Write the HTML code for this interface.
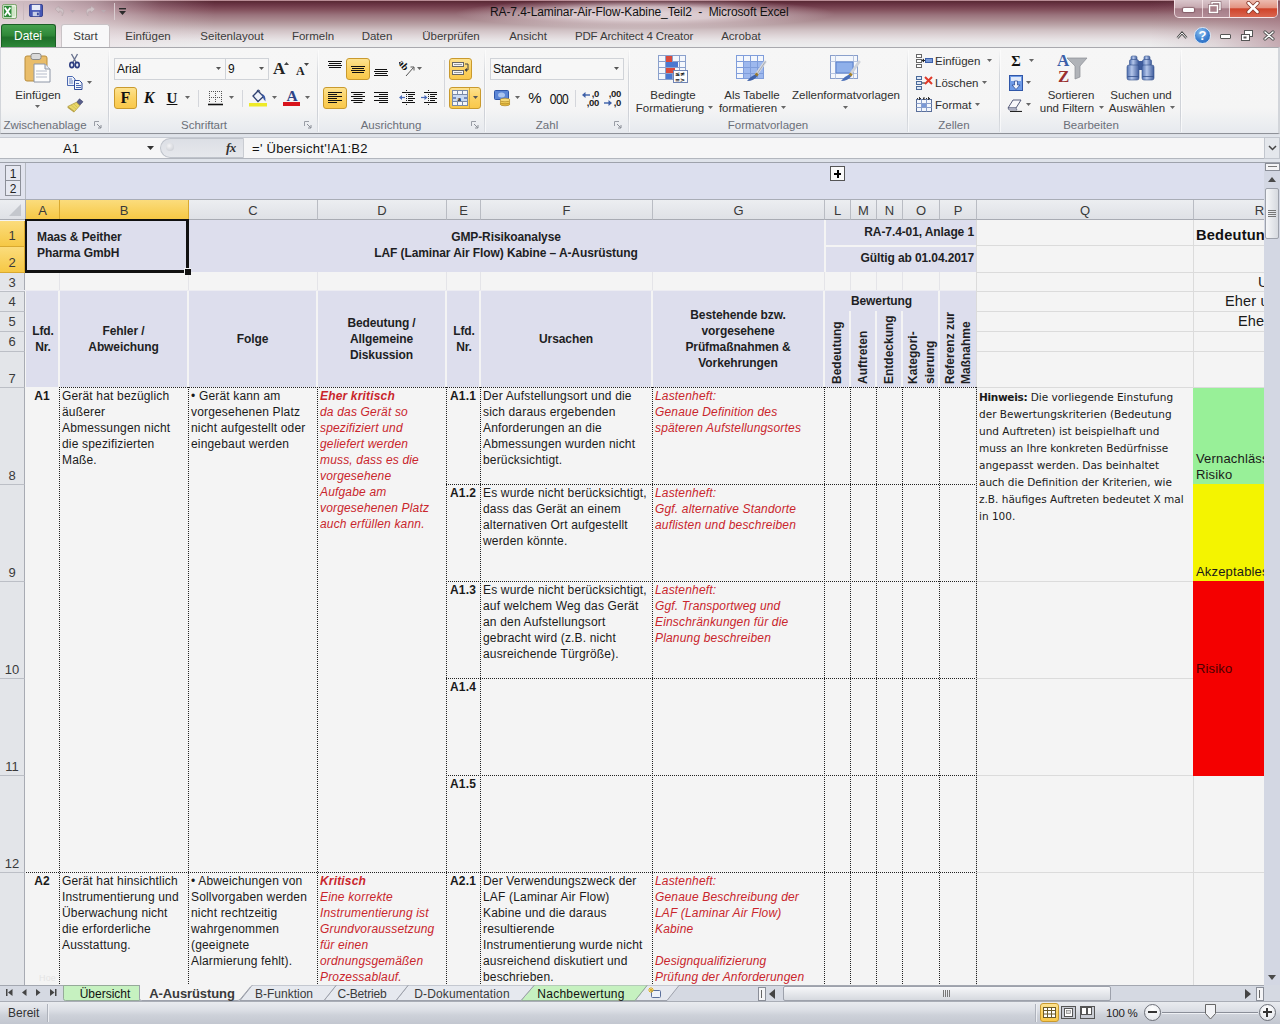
<!DOCTYPE html>
<html lang="de"><head><meta charset="utf-8"><title>RA-7.4-Laminar-Air-Flow-Kabine_Teil2 - Microsoft Excel</title>
<style>
*{box-sizing:border-box;margin:0;padding:0}
html,body{width:1280px;height:1024px;overflow:hidden;background:#f4f4f4;font-family:"Liberation Sans",sans-serif;font-size:12px;color:#1a1a1a}
.abs,.abs *{position:absolute}
#root{position:relative;width:1280px;height:1024px;overflow:hidden}
#root div,#root span.p,#root svg{position:absolute}
/* title */
#title{left:0;top:0;width:1280px;height:48px;background:linear-gradient(180deg,#e8bcc5 0px,#5a2a36 1.5px,#6d3747 5px,#84525e 10px,#9a737c 15px,#aa8a90 20px,#bba4a8 25px,#cfc0c3 30px,#ddd3d6 35px,#e8e4e6 40px,#ececed 45px,#ececed 48px)}
#titleglowL{left:0;top:0;width:220px;height:48px;background:linear-gradient(90deg,rgba(235,224,228,.82) 0,rgba(235,224,228,.76) 40px,rgba(235,224,228,.58) 95px,rgba(235,224,228,.42) 122px,rgba(235,224,228,.18) 160px,rgba(235,224,228,0) 215px)}
#titleglowT{left:455px;top:0;width:380px;height:30px;background:radial-gradient(ellipse 50% 50% at 50% 45%,rgba(240,232,235,.85) 0,rgba(240,232,235,.7) 45%,rgba(240,232,235,.25) 75%,rgba(240,232,235,0) 100%)}
#titletext{left:490px;top:3px;height:18px;font-size:12px;white-space:pre;letter-spacing:-.1px;line-height:18px;color:#111}
.rt{top:24px;height:24px;line-height:24px;font-size:11.500px;color:#3b3b3b;white-space:nowrap;text-align:center}
#ribbon{left:0;top:47px;width:1280px;height:87px;background:linear-gradient(180deg,#f6f6f6 0,#f5f5f5 60px,#eceef1 75px,#e6e9ee 86px);border-top:1px solid #a9a9ae;border-bottom:1px solid #8e9198;border-right:2px solid #d2d5da;border-left:1px solid #d2d5da}
.gl{top:117px;height:16px;line-height:16px;font-size:11.5px;color:#6b6f78;text-align:center;white-space:nowrap}
.gs{top:50px;width:1px;height:82px;background:linear-gradient(180deg,rgba(200,204,210,0),#d3d6db 30%,#cfd2d8 80%,rgba(200,204,210,.4));box-shadow:1px 0 0 rgba(255,255,255,.6)}
.rl{font-size:11.5px;line-height:13px;color:#2f2f2f;white-space:nowrap;text-align:center}
.ybtn{background:linear-gradient(180deg,#fde28f,#fbd264 50%,#f9c84a);border:1px solid #c99a2e;border-radius:3px}
.cbx{background:#f7f7f7;border:1px solid #d0d3d8}
/* formula bar */
#fbar{left:0;top:135px;width:1280px;height:28px;background:#dfe3ea}
/* grid */
.hdr{background:#e4e6ea;color:#333;font-size:13px;text-align:center}
.lav{background:#dddeed}
.ch{height:20px;line-height:22px;font-size:13px;color:#3a3a3a;text-align:center;background:linear-gradient(180deg,#eceef1,#dfe1e6);border-right:1px solid #b9bcc3;border-bottom:1px solid #a8abb3}
.rh{left:0;width:25px;font-size:13px;color:#3a3a3a;text-align:center;background:#e3e5e9;border-right:1px solid #a8abb3;border-bottom:1px solid #bcbfc6}
.sel{background:linear-gradient(180deg,#fbdc7c,#f6c845)!important;border-color:#d9a92f!important}
.hc{letter-spacing:-.1px;font-weight:bold;font-size:12px;line-height:16px;color:#1e1e24;text-align:center;white-space:nowrap}
.ct{letter-spacing:.17px;font-size:12px;line-height:16px;color:#1a1a1a;white-space:nowrap}
.red{color:#c9262c;font-style:italic}
.vd{width:0;border-left:1px dotted #222}
.hd{height:0;border-top:1px dotted #222}
.gv{width:1px;background:#d9d9d9}
.gh{height:1px;background:#d9d9d9}
.q b{letter-spacing:-.3px}.q{font-family:"DejaVu Sans","Liberation Sans",sans-serif;font-size:10.5px;line-height:17px;color:#1a1a1a;white-space:nowrap}
.rot{transform-origin:0 0;transform:rotate(-90deg);font-weight:bold;font-size:12px;line-height:14px;white-space:nowrap;color:#1e1e24}
.tab{top:986px;height:16px;line-height:16px;font-size:12px;color:#3a3a3a;white-space:nowrap;text-align:center}
</style></head><body><div id="root">
<div id="title"></div>
<div id="titleglowL"></div>
<div id="titleglowT"></div>
<div id="titletext">RA-7.4-Laminar-Air-Flow-Kabine_Teil2  -  Microsoft Excel</div>
<!-- excel icon -->
<svg style="left:2px;top:4px" width="15" height="15" viewBox="0 0 17 17"><rect x=".5" y=".5" width="16" height="16" rx="2" fill="#e9f3e4" stroke="#6a9a5a"/><rect x="2" y="2" width="9" height="13" fill="#2f8a3a"/><path d="M3.2 4 L9.5 13 M9.5 4 L3.2 13" stroke="#fff" stroke-width="2.2"/><rect x="11" y="3" width="4" height="11" fill="#cfe6c6"/></svg>
<div style="left:23px;top:3px;width:1px;height:17px;background:#c9b8bd"></div>
<!-- save -->
<svg style="left:29px;top:4px" width="14" height="13" viewBox="0 0 15 15" preserveAspectRatio="none"><rect x=".5" y=".5" width="14" height="14" rx="1.5" fill="#4657b5" stroke="#2c3a8a"/><rect x="3" y="1" width="9" height="6" fill="#e8ecf8"/><rect x="4" y="9" width="7" height="5" fill="#c9cfe6"/><rect x="8.5" y="10" width="2" height="3" fill="#3a4aa0"/></svg>
<!-- undo redo (disabled) -->
<svg style="left:52px;top:4px" width="30" height="15" viewBox="0 0 30 15"><path d="M3 5 L7 2 V4 C12 4 13 8 10 12 C11 8 9 7 7 7 V9 Z" fill="#cfc2c6" stroke="#b5a4aa" stroke-width=".6"/><path d="M18 6 h5 l-2.5 3z" fill="#b9aab0"/></svg>
<svg style="left:83px;top:4px" width="30" height="15" viewBox="0 0 30 15"><path d="M12 5 L8 2 V4 C3 4 2 8 5 12 C4 8 6 7 8 7 V9 Z" fill="#cfc2c6" stroke="#b5a4aa" stroke-width=".6"/><path d="M18 6 h5 l-2.5 3z" fill="#b9aab0"/></svg>
<div style="left:114px;top:3px;width:1px;height:17px;background:#d9ccd0"></div>
<svg style="left:118px;top:7px" width="9" height="9" viewBox="0 0 9 9"><rect x="1" y="1" width="7" height="1.4" fill="#2a2a2a"/><path d="M1 4 h7 l-3.5 4z" fill="#2a2a2a"/></svg>
<!-- window buttons -->
<div style="left:1150px;top:0;width:130px;height:47px;background:linear-gradient(90deg,rgba(170,125,136,0) 0,rgba(170,125,136,.18) 50%,rgba(165,118,130,.55) 100%)"></div>
<div style="left:1174px;top:0;width:104px;height:18px;border:1px solid rgba(255,240,242,.75);border-top:none;border-radius:0 0 5px 5px;background:linear-gradient(180deg,#dac6cb 0,#c6a9b0 45%,#a57c87 52%,#b18c96 100%)"></div>
<div style="left:1230px;top:0;width:47px;height:17px;border-radius:0 0 4px 0;background:linear-gradient(180deg,#ecbbb0 0,#e39482 45%,#cf432a 52%,#da6650 100%)"></div>
<div style="left:1202px;top:0;width:1px;height:17px;background:rgba(255,240,242,.7)"></div>
<div style="left:1229px;top:0;width:1px;height:17px;background:rgba(255,240,242,.7)"></div>
<div style="left:1183px;top:8px;width:11px;height:4px;background:#fff;border-radius:1px;box-shadow:0 0 1px 1px rgba(110,70,80,.6)"></div>
<svg style="left:1208px;top:1px" width="14" height="14" viewBox="0 0 14 14"><rect x="4" y="1.500" width="8" height="7" fill="none" stroke="#7a5560" stroke-width="2.600"/><rect x="4" y="1.500" width="8" height="7" fill="none" stroke="#fff" stroke-width="1.500"/><rect x="1.500" y="4.500" width="8" height="7" fill="#a8808a" stroke="#7a5560" stroke-width="2.600"/><rect x="1.500" y="4.500" width="8" height="7" fill="#a8808a" stroke="#fff" stroke-width="1.500"/></svg>
<svg style="left:1246px;top:1px" width="14" height="13" viewBox="0 0 14 13"><path d="M2.500 2 L11.500 11 M11.500 2 L2.500 11" stroke="#8a3a2c" stroke-width="4.200" stroke-linecap="round"/><path d="M2.500 2 L11.500 11 M11.500 2 L2.500 11" stroke="#fff" stroke-width="2.500" stroke-linecap="round"/></svg>
<!-- ribbon tabs -->

<div style="left:1px;top:24px;width:55px;height:24px;border-radius:3px 3px 0 0;background:linear-gradient(180deg,#46a04e 0,#2f8838 45%,#1f6f2a 55%,#2e8a3a 100%);border:1px solid #1c5e26;border-bottom:none"></div>
<div class="rt" style="left:0;width:56px;color:#fff;font-size:12px">Datei</div>
<div style="left:61px;top:24px;width:49px;height:24px;border-radius:3px 3px 0 0;background:#f8f8f9;border:1px solid #c9c3c6;border-bottom:none"></div>
<div class="rt" style="left:61px;width:49px">Start</div>
<div class="rt" style="left:118px;width:60px">Einfügen</div>
<div class="rt" style="left:192px;width:80px">Seitenlayout</div>
<div class="rt" style="left:283px;width:60px">Formeln</div>
<div class="rt" style="left:352px;width:50px">Daten</div>
<div class="rt" style="left:411px;width:80px">Überprüfen</div>
<div class="rt" style="left:498px;width:60px">Ansicht</div>
<div class="rt" style="left:564px;width:140px;letter-spacing:-.14px">PDF Architect 4 Creator</div>
<div class="rt" style="left:711px;width:60px">Acrobat</div>
<!-- right-side small icons -->
<svg style="left:1176px;top:30px" width="12" height="10" viewBox="0 0 12 10"><path d="M1.5 8 L6 3 L10.5 8" fill="none" stroke="#444" stroke-width="2.6"/><path d="M1.5 8 L6 3 L10.5 8" fill="none" stroke="#fff" stroke-width="1"/></svg>
<div style="left:1194px;top:27px;width:17px;height:17px;border-radius:9px;background:radial-gradient(circle at 40% 30%,#8fc0ee,#3b7fd0 55%,#2563b8);border:1px solid #d8e6f5;color:#fff;font-weight:bold;font-size:13px;line-height:15px;text-align:center">?</div>
<div style="left:1220px;top:34px;width:11px;height:5px;border:1px solid #555;background:#fff;border-radius:1px"></div>
<svg style="left:1240px;top:29px" width="14" height="13" viewBox="0 0 14 13"><rect x="4.5" y="1.5" width="8" height="6" fill="#fff" stroke="#555"/><rect x="1.5" y="5.5" width="8" height="6" fill="#fff" stroke="#555"/><rect x="3.5" y="7.5" width="3" height="2" fill="#555"/></svg>
<svg style="left:1263px;top:30px" width="12" height="11" viewBox="0 0 12 11"><path d="M2 2 L10 9 M10 2 L2 9" stroke="#555" stroke-width="3.2" stroke-linecap="round"/><path d="M2 2 L10 9 M10 2 L2 9" stroke="#fff" stroke-width="1.4" stroke-linecap="round"/></svg>

<div id="ribbon"></div>
<div style="left:0;top:134px;width:1280px;height:4px;background:#dde0e6"></div>
<!-- group separators -->
<div class="gs" style="left:108px"></div><div class="gs" style="left:317px"></div><div class="gs" style="left:484px"></div><div class="gs" style="left:628px"></div><div class="gs" style="left:907px"></div><div class="gs" style="left:999px"></div><div class="gs" style="left:1180px"></div>
<!-- group labels -->
<div class="gl" style="left:0;width:90px">Zwischenablage</div>
<div class="gl" style="left:154px;width:100px">Schriftart</div>
<div class="gl" style="left:341px;width:100px">Ausrichtung</div>
<div class="gl" style="left:517px;width:60px">Zahl</div>
<div class="gl" style="left:718px;width:100px">Formatvorlagen</div>
<div class="gl" style="left:924px;width:60px">Zellen</div>
<div class="gl" style="left:1041px;width:100px">Bearbeiten</div>
<!-- dialog launchers -->
<svg class="dl" style="left:94px;top:121px" width="8" height="8" viewBox="0 0 8 8"><path d="M.5 5V.5H5" fill="none" stroke="#9a9ea6"/><path d="M3 3 L7 7 M7 4 V7 H4" fill="none" stroke="#8a8e96"/></svg>
<svg class="dl" style="left:304px;top:121px" width="8" height="8" viewBox="0 0 8 8"><path d="M.5 5V.5H5" fill="none" stroke="#9a9ea6"/><path d="M3 3 L7 7 M7 4 V7 H4" fill="none" stroke="#8a8e96"/></svg>
<svg class="dl" style="left:471px;top:121px" width="8" height="8" viewBox="0 0 8 8"><path d="M.5 5V.5H5" fill="none" stroke="#9a9ea6"/><path d="M3 3 L7 7 M7 4 V7 H4" fill="none" stroke="#8a8e96"/></svg>
<svg class="dl" style="left:614px;top:121px" width="8" height="8" viewBox="0 0 8 8"><path d="M.5 5V.5H5" fill="none" stroke="#9a9ea6"/><path d="M3 3 L7 7 M7 4 V7 H4" fill="none" stroke="#8a8e96"/></svg>
<!-- CLIPBOARD -->
<svg style="left:23px;top:52px" width="30" height="32" viewBox="0 0 30 32"><rect x="2" y="4" width="22" height="25" rx="2" fill="#e9bd6a" stroke="#b98d3c"/><rect x="8" y="1.5" width="10" height="6" rx="2" fill="#d9d9d9" stroke="#8a8a8a"/><path d="M11 12 h11 l5 5 v13 h-16z" fill="#fdfdfd" stroke="#8d96a6"/><path d="M22 12 v5 h5" fill="#e6e9ef" stroke="#8d96a6"/><path d="M13 19h11M13 22h11M13 25h11" stroke="#b5bccb"/></svg>
<div class="rl" style="left:8px;top:89px;width:60px">Einfügen</div>
<svg style="left:35px;top:105px" width="5" height="3"><path d="M0 0h5L2.500 3z" fill="#666"/></svg>
<svg style="left:69px;top:53px" width="11" height="16" viewBox="0 0 11 16"><path d="M2.500 1 L7.500 10 M8.500 1 L3.500 10" stroke="#6a7390" stroke-width="1.400"/><ellipse cx="2.800" cy="12" rx="2" ry="2.600" fill="#e8ecf6" stroke="#2c3c80" stroke-width="1.600"/><ellipse cx="8.200" cy="12" rx="2" ry="2.600" fill="#e8ecf6" stroke="#2c3c80" stroke-width="1.600"/></svg>
<svg style="left:67px;top:76px" width="16" height="14" viewBox="0 0 16 14"><path d="M.5 .5h5l2.500 2.500v6.500h-7.500z" fill="#eef2fa" stroke="#4a68b0"/><path d="M2 3h3M2 5h4M2 7h4" stroke="#6f86c0"/><path d="M7.500 4.500h5l2.500 2.500v6.500h-7.500z" fill="#f4f7fc" stroke="#2f4a98"/><path d="M9 7.500h3M9 9.500h5M9 11.500h5" stroke="#4a68b0"/></svg>
<svg style="left:87px;top:81px" width="5" height="3"><path d="M0 0h5L2.500 3z" fill="#666"/></svg>
<svg style="left:67px;top:98px" width="17" height="15" viewBox="0 0 17 15"><path d="M12.500 .8 L16 3.800 L12.500 7.500 L9.500 4.500z" fill="#5a5f8c" stroke="#3b3f66" stroke-width=".6"/><path d="M9.500 4.200 L12.800 7.600 L7.500 13.500 L.8 8.500z" fill="#e9d768" stroke="#a89238" stroke-width=".7"/><path d="M.8 8.500 L7.500 13.500 L7 14.500 L.5 9.800z" fill="#b8a040"/><path d="M4 7l5 4M6.500 5.500l4 4" stroke="#c9b648" stroke-width=".6"/></svg>
<!-- FONT -->
<div class="cbx" style="left:114px;top:58px;width:112px;height:22px"></div>
<div class="cbx" style="left:225px;top:58px;width:44px;height:22px"></div>
<div class="rl" style="left:117px;top:62px;font-size:12px;line-height:14px;color:#111">Arial</div>
<div class="rl" style="left:228px;top:62px;font-size:12px;line-height:14px;color:#111">9</div>
<svg style="left:216px;top:67px" width="5" height="3"><path d="M0 0h5L2.500 3z" fill="#555"/></svg>
<svg style="left:259px;top:67px" width="5" height="3"><path d="M0 0h5L2.500 3z" fill="#555"/></svg>
<div style="left:273px;top:59px;font-family:'Liberation Serif',serif;font-weight:bold;font-size:17px;line-height:20px;color:#222">A</div>
<svg style="left:284px;top:62px" width="5" height="3"><path d="M0 3h5L2.500 0z" fill="#444"/></svg>
<div style="left:296px;top:63px;font-family:'Liberation Serif',serif;font-weight:bold;font-size:12px;line-height:16px;color:#222">A</div>
<svg style="left:304px;top:63px" width="5" height="3"><path d="M0 0h5L2.500 3z" fill="#444"/></svg>
<div class="ybtn" style="left:114px;top:87px;width:23px;height:22px"></div>
<div style="left:114px;top:88px;width:23px;font-family:'Liberation Serif',serif;font-weight:bold;font-size:16px;line-height:20px;text-align:center;color:#111">F</div>
<div style="left:138px;top:88px;width:22px;font-family:'Liberation Serif',serif;font-weight:bold;font-style:italic;font-size:16px;line-height:20px;text-align:center;color:#111">K</div>
<div style="left:161px;top:88px;width:22px;font-family:'Liberation Serif',serif;font-weight:bold;font-size:15px;line-height:20px;text-align:center;color:#111;text-decoration:underline">U</div>
<svg style="left:185px;top:96px" width="5" height="3"><path d="M0 0h5L2.500 3z" fill="#666"/></svg>
<div style="left:198px;top:90px;width:1px;height:17px;background:#d4d6db"></div>
<svg style="left:208px;top:90px" width="15" height="16" viewBox="0 0 15 16"><path d="M1 1.500h13M1 7.500h13M1.500 1v12M7.500 1v12M13.500 1v12" stroke="#555" stroke-dasharray="1 1"/><path d="M0 14.500h15" stroke="#111" stroke-width="1.6"/></svg>
<svg style="left:229px;top:96px" width="5" height="3"><path d="M0 0h5L2.500 3z" fill="#666"/></svg>
<div style="left:242px;top:90px;width:1px;height:17px;background:#d4d6db"></div>
<svg style="left:248px;top:88px" width="20" height="20" viewBox="0 0 20 20"><path d="M5 8 L10 3 L15.500 8.500 L10 13.500z" fill="#eef1f8" stroke="#2f4070" stroke-width="1.300"/><path d="M9 3.500 q1-3 3 0" fill="none" stroke="#2f4070" stroke-width="1.100"/><path d="M13 6 q5 0 4.500 7.500 q-2.500-2-3-6z" fill="#3a5aa8"/><rect x="1" y="15" width="18" height="3.500" fill="#eeea28"/></svg>
<svg style="left:272px;top:96px" width="5" height="3"><path d="M0 0h5L2.500 3z" fill="#666"/></svg>
<div style="left:284px;top:86px;width:16px;font-family:'Liberation Serif',serif;font-weight:bold;font-size:15.500px;line-height:20px;text-align:center;color:#2f4488">A</div>
<div style="left:283px;top:102px;width:17px;height:4px;background:#d8141c"></div>
<svg style="left:305px;top:96px" width="5" height="3"><path d="M0 0h5L2.500 3z" fill="#666"/></svg>
<!-- ALIGNMENT -->
<div class="ybtn" style="left:346px;top:58px;width:24px;height:22px"></div>
<div class="ybtn" style="left:323px;top:87px;width:24px;height:22px"></div>
<div class="ybtn" style="left:449px;top:58px;width:23px;height:22px"></div>
<div class="ybtn" style="left:449px;top:87px;width:32px;height:22px"></div>
<div style="left:469px;top:88px;width:1px;height:20px;background:#d7a93a"></div>
<svg style="left:328px;top:61px" width="14" height="8" viewBox="0 0 14 8"><path d="M0 .5h14M1 2.500h12M0 4.500h14M1 6.500h12" stroke="#111"/></svg>
<svg style="left:351px;top:66px" width="14" height="8" viewBox="0 0 14 8"><path d="M0 .5h14M1 2.500h12M0 4.500h14M1 6.500h12" stroke="#111"/></svg>
<svg style="left:374px;top:69px" width="14" height="8" viewBox="0 0 14 8"><path d="M1 .5h12M0 2.500h14M1 4.500h12M0 6.500h14" stroke="#111"/></svg>
<svg style="left:399px;top:59px" width="17" height="18" viewBox="0 0 17 18"><path d="M7 17 L14.500 8.500" stroke="#555" stroke-width="1"/><path d="M11.500 8h3.500v3.500" fill="none" stroke="#555" stroke-width="1"/><text x="-1" y="9" font-family="Liberation Serif" font-size="10" font-weight="bold" fill="#111" transform="rotate(50 4 6)">ab</text></svg>
<svg style="left:417px;top:67px" width="5" height="3"><path d="M0 0h5L2.500 3z" fill="#666"/></svg>
<div style="left:444px;top:60px;width:1px;height:47px;background:#d4d6db"></div>
<svg style="left:452px;top:61px" width="18" height="16" viewBox="0 0 18 16"><rect x=".5" y="1.500" width="11" height="4" fill="#f4f4f4" stroke="#666"/><rect x=".5" y="9.500" width="11" height="4" fill="#f4f4f4" stroke="#666"/><path d="M2 3.500h8M2 11.500h8" stroke="#999"/><path d="M13 3h3v6h-3" fill="none" stroke="#444"/><path d="M15 7l-2.500 2 2.500 2z" fill="#444"/></svg>
<svg style="left:328px;top:92px" width="14" height="12" viewBox="0 0 14 12"><path d="M0 .5h14M0 2.500h9M0 4.500h14M0 6.500h9M0 8.500h14M0 10.500h9" stroke="#111"/></svg>
<svg style="left:351px;top:92px" width="14" height="12" viewBox="0 0 14 12"><path d="M0 .5h14M2.500 2.500h9M0 4.500h14M2.500 6.500h9M0 8.500h14M2.500 10.500h9" stroke="#111"/></svg>
<svg style="left:374px;top:92px" width="14" height="12" viewBox="0 0 14 12"><path d="M0 .5h14M5 2.500h9M0 4.500h14M5 6.500h9M0 8.500h14M5 10.500h9" stroke="#111"/></svg>
<svg style="left:399px;top:90px" width="17" height="16" viewBox="0 0 17 16"><path d="M3 2.500h13M9 4.500h7M9 6.500h5M9 8.500h7M9 10.500h5M3 12.500h13" stroke="#111"/><path d="M7.500 0v16" stroke="#222" stroke-dasharray="1 1"/><path d="M1 7.500h5" stroke="#4a6ab8" stroke-width="1.200"/><path d="M0 7.500l3-2.500v5z" fill="#4a6ab8"/></svg>
<svg style="left:421px;top:90px" width="17" height="16" viewBox="0 0 17 16"><path d="M3 2.500h13M9 4.500h7M9 6.500h5M9 8.500h7M9 10.500h5M3 12.500h13" stroke="#111"/><path d="M7.500 0v16" stroke="#222" stroke-dasharray="1 1"/><path d="M0 7.500h5" stroke="#4a6ab8" stroke-width="1.200"/><path d="M6.500 7.500l-3-2.500v5z" fill="#4a6ab8"/></svg>
<svg style="left:452px;top:90px" width="16" height="16" viewBox="0 0 16 16"><rect x=".5" y=".5" width="15" height="15" fill="#f4f6fa" stroke="#7a8aa8"/><path d="M.5 4.500h15M.5 11.500h15M5.500 .5v4M10.500 .5v4M5.500 11.500v4M10.500 11.500v4" stroke="#7a8aa8"/><rect x="1" y="5" width="14" height="6" fill="#c9d9f2"/><text x="5.500" y="10.500" font-family="Liberation Serif" font-size="7" font-weight="bold" fill="#111">a</text><path d="M1 8h3M12 8h3" stroke="#1f3f8a"/></svg>
<svg style="left:473px;top:96px" width="5" height="3"><path d="M0 0h5L2.500 3z" fill="#555"/></svg>
<!-- NUMBER -->
<div class="cbx" style="left:490px;top:58px;width:134px;height:22px"></div>
<div class="rl" style="left:493px;top:62px;font-size:12px;line-height:14px;color:#111">Standard</div>
<svg style="left:614px;top:67px" width="5" height="3"><path d="M0 0h5L2.500 3z" fill="#555"/></svg>
<svg style="left:494px;top:89px" width="18" height="18" viewBox="0 0 18 18"><rect x=".5" y="1.500" width="14" height="9" rx="1" fill="#5b86d6" stroke="#2f56a8"/><ellipse cx="7.500" cy="6" rx="3.500" ry="2.500" fill="#a9c4f0"/><ellipse cx="11" cy="15" rx="5" ry="1.800" fill="#e2b73c" stroke="#a8801c" stroke-width=".6"/><ellipse cx="11" cy="13" rx="5" ry="1.800" fill="#f0cc58" stroke="#a8801c" stroke-width=".6"/><ellipse cx="11" cy="11" rx="5" ry="1.800" fill="#f6da7a" stroke="#a8801c" stroke-width=".6"/></svg>
<svg style="left:515px;top:96px" width="5" height="3"><path d="M0 0h5L2.500 3z" fill="#666"/></svg>
<div class="rl" style="left:525px;top:90px;width:20px;font-size:15px;line-height:16px;color:#111">%</div>
<div class="rl" style="left:547px;top:91px;width:24px;font-size:12px;line-height:16px;color:#111;letter-spacing:-.5px;transform:scaleY(1.15)">000</div>
<div style="left:575px;top:90px;width:1px;height:17px;background:#d4d6db"></div>
<div class="rl" style="left:580px;top:90px;width:19px;font-size:9.500px;line-height:8.500px;font-weight:bold;color:#222;text-align:right;letter-spacing:-.3px">,0<br>,00</div>
<svg style="left:582px;top:92px" width="8" height="6"><path d="M8 3H2" stroke="#3c5fa8" stroke-width="1.400"/><path d="M0 3l3.500-3v6z" fill="#3c5fa8"/></svg>
<div class="rl" style="left:602px;top:90px;width:19px;font-size:9.500px;line-height:8.500px;font-weight:bold;color:#222;text-align:right;letter-spacing:-.3px">,00<br>,0</div>
<svg style="left:604px;top:100px" width="8" height="6"><path d="M0 3H6" stroke="#3c5fa8" stroke-width="1.400"/><path d="M8 3l-3.500-3v6z" fill="#3c5fa8"/></svg>
<!-- STYLES -->
<svg style="left:658px;top:55px" width="31" height="28" viewBox="0 0 31 28"><rect x=".5" y=".5" width="27" height="24" fill="#f4f7fc" stroke="#8aa0cc"/><path d="M.5 6.500h27M.5 12.500h27M.5 18.500h27M7.500 .5v24M14.500 .5v24M21.500 .5v24" stroke="#8aa0cc"/><rect x="8" y="1" width="6" height="11" fill="#d94a3c"/><rect x="8" y="7" width="12" height="5" fill="#4a78d0"/><rect x="8" y="13" width="9" height="5" fill="#d94a3c"/><rect x="8" y="19" width="6" height="5" fill="#4a78d0"/><rect x="15.500" y="15.500" width="14" height="12" fill="#fdfdfd" stroke="#6f84b4"/><text x="17" y="21.300" font-family="DejaVu Sans" font-size="6" font-weight="bold" fill="#111">≤≠</text><text x="17" y="26.800" font-family="DejaVu Sans" font-size="6" font-weight="bold" fill="#111">=&gt;</text></svg>
<div class="rl" style="left:633px;top:89px;width:80px">Bedingte</div>
<div class="rl" style="left:630px;top:102px;width:80px">Formatierung</div>
<svg style="left:708px;top:106px" width="5" height="3"><path d="M0 0h5L2.500 3z" fill="#666"/></svg>
<svg style="left:736px;top:55px" width="31" height="28" viewBox="0 0 31 28"><rect x=".5" y=".5" width="27" height="23" fill="#f4f7fc"/><rect x="7.500" y="6.500" width="20" height="17" fill="#9db8ee"/><path d="M.5 6.500h27M.5 12.500h27M.5 18.500h27M7.500 .5v23M14.500 .5v23M21.500 .5v23" stroke="#7f9ddb"/><rect x=".5" y=".5" width="27" height="23" fill="none" stroke="#7f9ddb"/><path d="M29 7 L20 20" stroke="#d6d9df" stroke-width="3" stroke-linecap="round"/><path d="M29.500 6.500 L21 19" stroke="#9a9ea8" stroke-width=".8"/><path d="M20 19 q-5 2 -9 7 q7 0 10.500-5z" fill="#3f62a8"/><path d="M19.500 18.500l2.500 2" stroke="#9a7a30" stroke-width="2.500"/></svg>
<div class="rl" style="left:712px;top:89px;width:80px">Als Tabelle</div>
<div class="rl" style="left:708px;top:102px;width:80px">formatieren</div>
<svg style="left:781px;top:106px" width="5" height="3"><path d="M0 0h5L2.500 3z" fill="#666"/></svg>
<svg style="left:830px;top:55px" width="31" height="28" viewBox="0 0 31 28"><rect x=".5" y=".5" width="27" height="23" fill="#f4f7fc" stroke="#8aa0cc"/><path d="M.5 6.500h27M.5 18.500h27M5.500 .5v23M23.500 .5v23" stroke="#b9c6e0"/><rect x="6" y="7" width="17" height="11" fill="#8fb0ea" stroke="#5a80cc"/><path d="M29 7 L20 20" stroke="#cfd3da" stroke-width="3" stroke-linecap="round"/><path d="M20 19 q-5 2 -9 7 q7 0 10.500-5z" fill="#4a6fb8"/><path d="M19.500 18.500l2.500 2" stroke="#a8842c" stroke-width="2.500"/></svg>
<div class="rl" style="left:786px;top:89px;width:120px">Zellenformatvorlagen</div>
<svg style="left:843px;top:106px" width="5" height="3"><path d="M0 0h5L2.500 3z" fill="#666"/></svg>
<!-- CELLS -->
<svg style="left:916px;top:54px" width="17" height="15" viewBox="0 0 17 15"><rect x=".5" y=".5" width="5" height="3" fill="#fff" stroke="#666"/><rect x=".5" y="5.500" width="5" height="3" fill="#fff" stroke="#666"/><rect x=".5" y="10.500" width="5" height="3" fill="#fff" stroke="#666"/><rect x="9.500" y="4.500" width="7" height="4" fill="#7a9ad8" stroke="#3c5fa8"/><path d="M9 6.500H6" stroke="#222"/><path d="M5.500 6.500l2.500-2v4z" fill="#222"/></svg>
<div class="rl" style="left:935px;top:55px;text-align:left">Einfügen</div>
<svg style="left:987px;top:59px" width="5" height="3"><path d="M0 0h5L2.500 3z" fill="#666"/></svg>
<svg style="left:916px;top:75px" width="17" height="16" viewBox="0 0 17 16"><rect x=".5" y="1.500" width="5" height="3" fill="#dfe8f6" stroke="#4a6a9a"/><rect x=".5" y="6.500" width="5" height="3" fill="#dfe8f6" stroke="#4a6a9a"/><rect x=".5" y="11.500" width="5" height="3" fill="#dfe8f6" stroke="#4a6a9a"/><path d="M6 8h3" stroke="#222"/><path d="M9 2l7 7M16 2l-7 7" stroke="#e03a2a" stroke-width="2"/></svg>
<div class="rl" style="left:935px;top:77px;text-align:left">Löschen</div>
<svg style="left:982px;top:81px" width="5" height="3"><path d="M0 0h5L2.500 3z" fill="#666"/></svg>
<svg style="left:916px;top:97px" width="17" height="16" viewBox="0 0 17 16"><rect x=".5" y="2.500" width="15" height="12" fill="#f4f7fc" stroke="#5a6f9a"/><path d="M.5 6.500h15M.5 10.500h15M5.500 2.500v12M10.500 2.500v12" stroke="#8aa0cc"/><rect x="6" y="7" width="4" height="3" fill="#7a9ad8"/><path d="M1 1.500h14" stroke="#333" stroke-dasharray="1 2"/><path d="M3.500 0v3M8 0v3M12.500 0v3" stroke="#333"/></svg>
<div class="rl" style="left:935px;top:99px;text-align:left">Format</div>
<svg style="left:975px;top:103px" width="5" height="3"><path d="M0 0h5L2.500 3z" fill="#666"/></svg>
<!-- EDITING -->
<div style="left:1009px;top:51px;width:14px;font-family:'Liberation Serif',serif;font-weight:bold;font-size:14.500px;line-height:20px;color:#111;text-align:center">Σ</div>
<svg style="left:1029px;top:59px" width="5" height="3"><path d="M0 0h5L2.500 3z" fill="#666"/></svg>
<svg style="left:1009px;top:75px" width="14" height="16" viewBox="0 0 14 16"><rect x=".5" y=".5" width="13" height="15" fill="#6f9be6" stroke="#2f56a8"/><rect x="2" y="2" width="10" height="4" fill="#dfe9fa"/><path d="M5.500 6v4H3l4 4.500 4-4.500H8.500V6z" fill="#eef3fc" stroke="#1f3f8a" stroke-width=".7"/></svg>
<svg style="left:1026px;top:81px" width="5" height="3"><path d="M0 0h5L2.500 3z" fill="#666"/></svg>
<svg style="left:1007px;top:98px" width="17" height="14" viewBox="0 0 17 14"><path d="M6 2 L14 2 L9 10 L1 10z" fill="#f7f7fa" stroke="#555a78"/><path d="M1 10 L9 10 L10 12 L2 12z" fill="#d9dbe6" stroke="#555a78" stroke-width=".7"/><path d="M3 13.500h12" stroke="#222" stroke-width="1.2"/></svg>
<svg style="left:1026px;top:103px" width="5" height="3"><path d="M0 0h5L2.500 3z" fill="#666"/></svg>
<svg style="left:1056px;top:52px" width="32" height="32" viewBox="0 0 32 32"><text x="1" y="14" font-family="Liberation Serif" font-weight="bold" font-size="17" fill="#3c5fa8">A</text><text x="2" y="30" font-family="Liberation Serif" font-weight="bold" font-size="17" fill="#9a3030">Z</text><path d="M11 6 H31 L24 14 V25 L19 27 V14z" fill="#b0b3b8" stroke="#8a8d93" stroke-width=".7"/></svg>
<div class="rl" style="left:1031px;top:89px;width:80px">Sortieren</div>
<div class="rl" style="left:1027px;top:102px;width:80px">und Filtern</div>
<svg style="left:1099px;top:106px" width="5" height="3"><path d="M0 0h5L2.500 3z" fill="#666"/></svg>
<svg style="left:1126px;top:55px" width="29" height="26" viewBox="0 0 29 26"><defs><linearGradient id="bg1" x1="0" x2="1"><stop offset="0" stop-color="#4f6fb0"/><stop offset=".4" stop-color="#b4c6ea"/><stop offset="1" stop-color="#3f5c9c"/></linearGradient></defs><rect x="5" y="1" width="6" height="4" rx="1.500" fill="url(#bg1)" stroke="#34508c" stroke-width=".6"/><rect x="18" y="1" width="6" height="4" rx="1.500" fill="url(#bg1)" stroke="#34508c" stroke-width=".6"/><rect x="3.500" y="4.500" width="9" height="6" rx="1.500" fill="url(#bg1)" stroke="#34508c" stroke-width=".6"/><rect x="16.500" y="4.500" width="9" height="6" rx="1.500" fill="url(#bg1)" stroke="#34508c" stroke-width=".6"/><rect x="12" y="6" width="5" height="9" fill="#3f5c9c"/><rect x="1" y="10" width="12" height="15" rx="2" fill="url(#bg1)" stroke="#34508c" stroke-width=".6"/><rect x="16" y="10" width="12" height="15" rx="2" fill="url(#bg1)" stroke="#34508c" stroke-width=".6"/><path d="M1.500 21.500h11M16.500 21.500h11" stroke="#34508c" stroke-width=".8"/></svg>
<div class="rl" style="left:1101px;top:89px;width:80px">Suchen und</div>
<div class="rl" style="left:1097px;top:102px;width:80px">Auswählen</div>
<svg style="left:1170px;top:106px" width="5" height="3"><path d="M0 0h5L2.500 3z" fill="#666"/></svg>

<div id="fbar"></div>
<div style="left:0;top:137px;width:1264px;height:22px;background:#f6f6f7;border-top:1px solid #c6cad2;border-bottom:1px solid #b2b6be"></div>
<div style="left:160px;top:138px;width:84px;height:20px;background:linear-gradient(180deg,#dcdfe5,#e6e8ec);border-radius:10px 0 0 10px;border:1px solid #bfc3cb;border-right:1px solid #c9ccd2"></div>
<div style="left:166px;top:143px;width:8px;height:8px;border-radius:4px;background:radial-gradient(circle at 40% 35%,#f4f4f6,#c4c7ce)"></div>
<div style="left:226px;top:138px;width:16px;font-family:'Liberation Serif',serif;font-style:italic;font-weight:bold;font-size:13px;line-height:20px;color:#333;letter-spacing:-.5px">fx</div>
<div style="left:40px;top:140px;width:62px;font-size:13px;line-height:18px;text-align:center;color:#111">A1</div>
<svg style="left:147px;top:146px" width="7" height="4"><path d="M0 0h7L3.500 4z" fill="#333"/></svg>
<div style="left:252px;top:140px;font-size:13px;letter-spacing:.3px;line-height:18px;color:#111;white-space:nowrap">=' Übersicht'!A1:B2</div>
<div style="left:1264px;top:137px;width:16px;height:22px;background:#e4e7ec;border:1px solid #c2c6ce"></div>
<svg style="left:1268px;top:145px" width="9" height="6"><path d="M1 1l3.500 3.500L8 1" fill="none" stroke="#444" stroke-width="1.500"/></svg>
<div style="left:0;top:162px;width:1280px;height:1px;background:#9ea2ab"></div>

<div id="grid" style="left:0;top:163px;width:1264px;height:822px;overflow:hidden;background:#f4f4f4">
<div style="left:0;top:0;width:1264px;height:37px;background:#dcdfee"></div>
<div style="left:0;top:0;width:26px;height:37px;background:#e1e3ee;border-right:1px solid #b4b8c0"></div>
<div style="left:5px;top:2px;width:16px;height:16px;border:1px solid #8c8f98;background:#e6e8f1;font-size:12px;line-height:16px;text-align:center;color:#222">1</div>
<div style="left:5px;top:17px;width:16px;height:16px;border:1px solid #8c8f98;background:#e6e8f1;font-size:12px;line-height:16px;text-align:center;color:#222">2</div>
<div style="left:830px;top:3px;width:15px;height:15px;border:1px solid #555;background:#fafafa"></div>
<div style="left:834px;top:10px;width:7px;height:1px;background:#000;box-shadow:0 1px 0 #000"></div>
<div style="left:837px;top:7px;width:2px;height:8px;background:#000"></div>
<div style="left:0;top:36px;width:1264px;height:1px;background:#a9adb6"></div>
<div style="left:0;top:37px;width:26px;height:20px;background:linear-gradient(180deg,#eceef1,#dfe1e6);border-right:1px solid #a8abb3;border-bottom:1px solid #a8abb3"></div>
<svg style="left:9px;top:41px" width="13" height="13"><path d="M12 0V12H0Z" fill="#c4c7cd"/></svg>
<div class="ch sel" style="left:26px;top:37px;width:34px">A</div>
<div class="ch sel" style="left:60px;top:37px;width:129px">B</div>
<div class="ch" style="left:189px;top:37px;width:129px">C</div>
<div class="ch" style="left:318px;top:37px;width:129px">D</div>
<div class="ch" style="left:447px;top:37px;width:34px">E</div>
<div class="ch" style="left:481px;top:37px;width:172px">F</div>
<div class="ch" style="left:653px;top:37px;width:172px">G</div>
<div class="ch" style="left:825px;top:37px;width:26px">L</div>
<div class="ch" style="left:851px;top:37px;width:26px">M</div>
<div class="ch" style="left:877px;top:37px;width:26px">N</div>
<div class="ch" style="left:903px;top:37px;width:37px">O</div>
<div class="ch" style="left:940px;top:37px;width:37px">P</div>
<div class="ch" style="left:977px;top:37px;width:217px">Q</div>
<div class="ch" style="left:1194px;top:37px;width:132px">R</div>
<div class="rh sel" style="top:58px;height:26px;line-height:18px;padding-top:6px">1</div>
<div class="rh sel" style="top:84px;height:26px;line-height:18px;padding-top:7px">2</div>
<div class="rh" style="top:110px;height:19px;line-height:18px;padding-top:1px">3</div>
<div class="rh" style="top:129px;height:20px;line-height:18px;padding-top:1px">4</div>
<div class="rh" style="top:149px;height:20px;line-height:18px;padding-top:1px">5</div>
<div class="rh" style="top:169px;height:20px;line-height:18px;padding-top:1px">6</div>
<div class="rh" style="top:189px;height:36px;line-height:18px;padding-top:18px">7</div>
<div class="rh" style="top:225px;height:97px;line-height:18px;padding-top:79px">8</div>
<div class="rh" style="top:322px;height:97px;line-height:18px;padding-top:79px">9</div>
<div class="rh" style="top:419px;height:97px;line-height:18px;padding-top:79px">10</div>
<div class="rh" style="top:516px;height:97px;line-height:18px;padding-top:79px">11</div>
<div class="rh" style="top:613px;height:97px;line-height:18px;padding-top:79px">12</div>
<div class="rh" style="top:710px;height:118px;line-height:18px;padding-top:100px"></div>
<div style="left:26px;top:57px;width:950px;height:52px;background:#dddeed"></div>
<div style="left:26px;top:128px;width:950px;height:96px;background:#dddeed"></div>
<div style="left:824px;top:57px;width:2px;height:52px;background:#f4f4f4"></div>
<div style="left:826px;top:82px;width:150px;height:2px;background:#f4f4f4"></div>
<div style="left:59px;top:109px;width:1px;height:19px;background:#e4e4e8"></div>
<div style="left:188px;top:109px;width:1px;height:19px;background:#e4e4e8"></div>
<div style="left:317px;top:109px;width:1px;height:19px;background:#e4e4e8"></div>
<div style="left:446px;top:109px;width:1px;height:19px;background:#e4e4e8"></div>
<div style="left:480px;top:109px;width:1px;height:19px;background:#e4e4e8"></div>
<div style="left:652px;top:109px;width:1px;height:19px;background:#e4e4e8"></div>
<div style="left:824px;top:109px;width:1px;height:19px;background:#e4e4e8"></div>
<div style="left:850px;top:109px;width:1px;height:19px;background:#e4e4e8"></div>
<div style="left:876px;top:109px;width:1px;height:19px;background:#e4e4e8"></div>
<div style="left:902px;top:109px;width:1px;height:19px;background:#e4e4e8"></div>
<div style="left:939px;top:109px;width:1px;height:19px;background:#e4e4e8"></div>
<div style="left:976px;top:109px;width:1px;height:19px;background:#e4e4e8"></div>
<div style="left:58px;top:128px;width:2px;height:96px;background:#f4f4f4"></div>
<div style="left:187px;top:128px;width:2px;height:96px;background:#f4f4f4"></div>
<div style="left:316px;top:128px;width:2px;height:96px;background:#f4f4f4"></div>
<div style="left:445px;top:128px;width:2px;height:96px;background:#f4f4f4"></div>
<div style="left:479px;top:128px;width:2px;height:96px;background:#f4f4f4"></div>
<div style="left:651px;top:128px;width:2px;height:96px;background:#f4f4f4"></div>
<div style="left:823px;top:128px;width:2px;height:96px;background:#f4f4f4"></div>
<div style="left:938px;top:128px;width:2px;height:96px;background:#f4f4f4"></div>
<div style="left:849px;top:148px;width:2px;height:76px;background:#f4f4f4"></div>
<div style="left:875px;top:148px;width:2px;height:76px;background:#f4f4f4"></div>
<div style="left:901px;top:148px;width:2px;height:76px;background:#f4f4f4"></div>
<div style="left:0;top:127px;width:976px;height:1px;background:#ececf2"></div>
<div style="left:977px;top:82px;width:287px;height:1px;background:#dbdbdb"></div>
<div style="left:977px;top:109px;width:287px;height:1px;background:#dbdbdb"></div>
<div style="left:977px;top:128px;width:287px;height:1px;background:#dbdbdb"></div>
<div style="left:977px;top:148px;width:287px;height:1px;background:#dbdbdb"></div>
<div style="left:977px;top:168px;width:287px;height:1px;background:#dbdbdb"></div>
<div style="left:977px;top:188px;width:287px;height:1px;background:#dbdbdb"></div>
<div style="left:977px;top:224px;width:287px;height:1px;background:#dbdbdb"></div>
<div style="left:1194px;top:321px;width:70px;height:1px;background:#dbdbdb"></div>
<div style="left:977px;top:418px;width:287px;height:1px;background:#dbdbdb"></div>
<div style="left:977px;top:515px;width:287px;height:1px;background:#dbdbdb"></div>
<div style="left:977px;top:612px;width:287px;height:1px;background:#dbdbdb"></div>
<div style="left:977px;top:709px;width:287px;height:1px;background:#dbdbdb"></div>
<div style="left:976px;top:57px;width:1px;height:770px;background:#dbdbdb"></div>
<div style="left:1193px;top:57px;width:1px;height:770px;background:#dbdbdb"></div>
<div style="left:1193px;top:225px;width:71px;height:96px;background:#98f098"></div>
<div style="left:1193px;top:321px;width:71px;height:97px;background:#f4f400"></div>
<div style="left:1193px;top:418px;width:71px;height:195px;background:#f40000"></div>
<div style="left:59px;top:224px;width:1px;height:603px;background:repeating-linear-gradient(180deg,#222 0,#222 1px,transparent 1px,transparent 2px)"></div>
<div style="left:188px;top:224px;width:1px;height:603px;background:repeating-linear-gradient(180deg,#222 0,#222 1px,transparent 1px,transparent 2px)"></div>
<div style="left:317px;top:224px;width:1px;height:603px;background:repeating-linear-gradient(180deg,#222 0,#222 1px,transparent 1px,transparent 2px)"></div>
<div style="left:446px;top:224px;width:1px;height:603px;background:repeating-linear-gradient(180deg,#222 0,#222 1px,transparent 1px,transparent 2px)"></div>
<div style="left:480px;top:224px;width:1px;height:603px;background:repeating-linear-gradient(180deg,#222 0,#222 1px,transparent 1px,transparent 2px)"></div>
<div style="left:652px;top:224px;width:1px;height:603px;background:repeating-linear-gradient(180deg,#222 0,#222 1px,transparent 1px,transparent 2px)"></div>
<div style="left:824px;top:224px;width:1px;height:603px;background:repeating-linear-gradient(180deg,#222 0,#222 1px,transparent 1px,transparent 2px)"></div>
<div style="left:850px;top:224px;width:1px;height:603px;background:repeating-linear-gradient(180deg,#222 0,#222 1px,transparent 1px,transparent 2px)"></div>
<div style="left:876px;top:224px;width:1px;height:603px;background:repeating-linear-gradient(180deg,#222 0,#222 1px,transparent 1px,transparent 2px)"></div>
<div style="left:902px;top:224px;width:1px;height:603px;background:repeating-linear-gradient(180deg,#222 0,#222 1px,transparent 1px,transparent 2px)"></div>
<div style="left:939px;top:224px;width:1px;height:603px;background:repeating-linear-gradient(180deg,#222 0,#222 1px,transparent 1px,transparent 2px)"></div>
<div style="left:976px;top:224px;width:1px;height:603px;background:repeating-linear-gradient(180deg,#222 0,#222 1px,transparent 1px,transparent 2px)"></div>
<div style="left:59px;top:224px;width:917px;height:1px;background:repeating-linear-gradient(90deg,#222 0,#222 1px,transparent 1px,transparent 2px)"></div>
<div style="left:26px;top:709px;width:950px;height:1px;background:repeating-linear-gradient(90deg,#222 0,#222 1px,transparent 1px,transparent 2px)"></div>
<div style="left:446px;top:321px;width:530px;height:1px;background:repeating-linear-gradient(90deg,#222 0,#222 1px,transparent 1px,transparent 2px)"></div>
<div style="left:446px;top:418px;width:530px;height:1px;background:repeating-linear-gradient(90deg,#222 0,#222 1px,transparent 1px,transparent 2px)"></div>
<div style="left:446px;top:515px;width:530px;height:1px;background:repeating-linear-gradient(90deg,#222 0,#222 1px,transparent 1px,transparent 2px)"></div>
<div style="left:446px;top:612px;width:530px;height:1px;background:repeating-linear-gradient(90deg,#222 0,#222 1px,transparent 1px,transparent 2px)"></div>
<div style="left:25px;top:56px;width:164px;height:54px;border:2px solid #111;border-width:2px 3px 3px 2px"></div>
<div style="left:184px;top:105px;width:7px;height:7px;background:#111;border:1px solid #f4f4f4;border-width:1px 0 0 1px"></div>
<div class="hc" style="left:37px;top:66px;text-align:left">Maas &amp; Peither<br>Pharma GmbH</div>
<div class="hc" style="left:188px;top:66px;width:636px">GMP-Risikoanalyse<br>LAF (Laminar Air Flow) Kabine – A-Ausrüstung</div>
<div class="hc" style="left:826px;top:61px;width:148px;text-align:right">RA-7.4-01, Anlage 1</div>
<div class="hc" style="left:826px;top:87px;width:148px;text-align:right">Gültig ab 01.04.2017</div>
<div class="hc" style="left:26px;top:160px;width:34px">Lfd.<br>Nr.</div>
<div class="hc" style="left:59px;top:160px;width:129px">Fehler /<br>Abweichung</div>
<div class="hc" style="left:188px;top:168px;width:129px">Folge</div>
<div class="hc" style="left:317px;top:152px;width:129px">Bedeutung /<br>Allgemeine<br>Diskussion</div>
<div class="hc" style="left:447px;top:160px;width:34px">Lfd.<br>Nr.</div>
<div class="hc" style="left:480px;top:168px;width:172px">Ursachen</div>
<div class="hc" style="left:652px;top:144px;width:172px">Bestehende bzw.<br>vorgesehene<br>Prüfmaßnahmen &amp;<br>Vorkehrungen</div>
<div class="hc" style="left:824px;top:130px;width:115px">Bewertung</div>
<div class="rot" style="left:830px;top:221px">Bedeutung</div>
<div class="rot" style="left:856px;top:221px">Auftreten</div>
<div class="rot" style="left:882px;top:221px">Entdeckung</div>
<div class="rot" style="left:906px;top:221px">Kategori-</div>
<div class="rot" style="left:922.5px;top:221px">sierung</div>
<div class="rot" style="left:943px;top:221px">Referenz zur</div>
<div class="rot" style="left:958.5px;top:221px">Maßnahme</div>
<div class="ct" style="left:1196px;top:64px;font-weight:bold;font-size:14.67px;color:#111">Bedeutung</div>
<div class="ct" style="left:1258px;top:110px;font-size:14.5px;line-height:18px">Unkritisch</div>
<div class="ct" style="left:1225px;top:129px;font-size:14.5px;line-height:18px">Eher unkritisch</div>
<div class="ct" style="left:1238px;top:149px;font-size:14.5px;line-height:18px">Eher kritisch</div>
<div class="ct" style="left:1196px;top:288px;font-size:13px;line-height:16px">Vernachlässigbares<br>Risiko</div>
<div class="ct" style="left:1196px;top:401px;font-size:13px;line-height:16px">Akzeptables Risiko</div>
<div class="ct" style="left:1196px;top:498px;font-size:13px;line-height:16px;color:#4a0000">Risiko</div>
<div class="ct" style="left:25px;top:225px;width:34px;text-align:center;font-weight:bold">A1</div>
<div class="ct" style="left:62px;top:225px;">Gerät hat bezüglich<br>äußerer<br>Abmessungen nicht<br>die spezifizierten<br>Maße.</div>
<div class="ct" style="left:191px;top:225px;">• Gerät kann am<br>vorgesehenen Platz<br>nicht aufgestellt oder<br>eingebaut werden</div>
<div class="ct red" style="left:320px;top:225px;"><b>Eher kritisch</b><br>da das Gerät so<br>spezifiziert und<br>geliefert werden<br>muss, dass es die<br>vorgesehene<br>Aufgabe am<br>vorgesehenen Platz<br>auch erfüllen kann.</div>
<div class="ct" style="left:446px;top:225px;width:34px;text-align:center;font-weight:bold">A1.1</div>
<div class="ct" style="left:446px;top:322px;width:34px;text-align:center;font-weight:bold">A1.2</div>
<div class="ct" style="left:446px;top:419px;width:34px;text-align:center;font-weight:bold">A1.3</div>
<div class="ct" style="left:446px;top:516px;width:34px;text-align:center;font-weight:bold">A1.4</div>
<div class="ct" style="left:446px;top:613px;width:34px;text-align:center;font-weight:bold">A1.5</div>
<div class="ct" style="left:446px;top:710px;width:34px;text-align:center;font-weight:bold">A2.1</div>
<div class="ct" style="left:483px;top:225px;">Der Aufstellungsort und die<br>sich daraus ergebenden<br>Anforderungen an die<br>Abmessungen wurden nicht<br>berücksichtigt.</div>
<div class="ct" style="left:483px;top:322px;">Es wurde nicht berücksichtigt,<br>dass das Gerät an einem<br>alternativen Ort aufgestellt<br>werden könnte.</div>
<div class="ct" style="left:483px;top:419px;">Es wurde nicht berücksichtigt,<br>auf welchem Weg das Gerät<br>an den Aufstellungsort<br>gebracht wird (z.B. nicht<br>ausreichende Türgröße).</div>
<div class="ct red" style="left:655px;top:225px;">Lastenheft:<br>Genaue Definition des<br>späteren Aufstellungsortes</div>
<div class="ct red" style="left:655px;top:322px;">Lastenheft:<br>Ggf. alternative Standorte<br>auflisten und beschreiben</div>
<div class="ct red" style="left:655px;top:419px;">Lastenheft:<br>Ggf. Transportweg und<br>Einschränkungen für die<br>Planung beschreiben</div>
<div class="q" style="left:979px;top:226px;"><b>Hinweis:</b> Die vorliegende Einstufung<br>der Bewertungskriterien (Bedeutung<br>und Auftreten) ist beispielhaft und<br>muss an Ihre konkreten Bedürfnisse<br>angepasst werden. Das beinhaltet<br>auch die Definition der Kriterien, wie<br>z.B. häufiges Auftreten bedeutet X mal<br>in 100.</div>
<div class="ct" style="left:25px;top:710px;width:34px;text-align:center;font-weight:bold">A2</div>
<div class="ct" style="left:62px;top:710px;">Gerät hat hinsichtlich<br>Instrumentierung und<br>Überwachung nicht<br>die erforderliche<br>Ausstattung.</div>
<div class="ct" style="left:191px;top:710px;">• Abweichungen von<br>Sollvorgaben werden<br>nicht rechtzeitig<br>wahrgenommen<br>(geeignete<br>Alarmierung fehlt).</div>
<div class="ct red" style="left:320px;top:710px;"><b>Kritisch</b><br>Eine korrekte<br>Instrumentierung ist<br>Grundvoraussetzung<br>für einen<br>ordnungsgemäßen<br>Prozessablauf.</div>
<div class="ct" style="left:483px;top:710px;">Der Verwendungszweck der<br>LAF (Laminar Air Flow)<br>Kabine und die daraus<br>resultierende<br>Instrumentierung wurde nicht<br>ausreichend diskutiert und<br>beschrieben.</div>
<div class="ct red" style="left:655px;top:710px;">Lastenheft:<br>Genaue Beschreibung der<br>LAF (Laminar Air Flow)<br>Kabine<br><br>Designqualifizierung<br>Prüfung der Anforderungen</div>
<div class="ct" style="left:39px;top:807px;font-size:9px;color:#e4e4e4">Hoe</div>
</div>
<!-- v scrollbar -->
<div style="left:1264px;top:163px;width:16px;height:822px;background:#d3d7e3"></div>
<div style="left:1265px;top:163px;width:15px;height:8px;background:#f4f4f6;border:1px solid #8a8e98"></div>
<div style="left:1268px;top:166px;width:9px;height:1px;background:#777"></div>
<svg style="left:1268px;top:177px" width="8" height="5"><path d="M0 5h8L4 0z" fill="#4a4a4a"/></svg>
<div style="left:1265px;top:188px;width:14px;height:51px;border:1px solid #9da1ab;border-radius:2px;background:linear-gradient(90deg,#f6f7f9,#e6e8ec 50%,#d6d9df)"></div>
<div style="left:1268px;top:210px;width:8px;height:1px;background:#777;box-shadow:0 2px 0 #777,0 4px 0 #777,0 6px 0 #777"></div>
<svg style="left:1268px;top:975px" width="8" height="5"><path d="M0 0h8L4 5z" fill="#4a4a4a"/></svg>
<!-- sheet tab bar -->
<div style="left:0;top:985px;width:1280px;height:16px;background:#d5d9e2;border-top:1px solid #a3a7b0"></div>
<svg style="left:5px;top:989px" width="56" height="7" viewBox="0 0 56 7"><g fill="#444"><rect x="1" y="0" width="1.500" height="7"/><path d="M7.500 0v7L3 3.500z"/><path d="M21.500 0v7L17 3.500z"/><path d="M31 0v7L35.500 3.500z"/><path d="M45 0v7L49.500 3.500z"/><rect x="50" y="0" width="1.500" height="7"/></g></svg>
<svg style="left:0;top:985px" width="700" height="16" viewBox="0 0 700 17" preserveAspectRatio="none">
<path d="M63.500 .5H139.500V16.500H65.500q-2 0-2-2z" fill="#c6f1c0" stroke="#93a897"/>
<path d="M647 .5 L635 16.500 H667 L679 .5" fill="#e6e9ef" stroke="#9a9ea8"/>
<path d="M534 .5 L521 16.500 H635 L647 .5" fill="#c6f1c0" stroke="#93a897"/>
<path d="M408 .5 L396 16.500 H521 L534 .5" fill="#e6e9ef" stroke="#9a9ea8"/>
<path d="M336 .5 L324 16.500 H396 L408 .5" fill="#e6e9ef" stroke="#9a9ea8"/>
<path d="M252 .5 L240 16.500 H324 L336 .5" fill="#e6e9ef" stroke="#9a9ea8"/>
<path d="M139.500 0 H252 L240 15.500 q-1 1-3 1 H141.500 q-2 0-2-2z" fill="#f4f4f4" stroke="#9a9ea8"/><rect x="140" y="0" width="111.500" height="1.500" fill="#f4f4f4"/>
</svg>
<div class="tab" style="left:65px;width:80px;color:#111">Übersicht</div>
<div class="tab" style="left:142px;width:100px;font-weight:bold;font-size:13px;letter-spacing:-.1px;color:#3a3a3a">A-Ausrüstung</div>
<div class="tab" style="left:244px;width:80px">B-Funktion</div>
<div class="tab" style="left:322px;width:80px;letter-spacing:-.2px">C-Betrieb</div>
<div class="tab" style="left:402px;width:120px;letter-spacing:.14px">D-Dokumentation</div>
<div class="tab" style="left:521px;width:120px;color:#111;letter-spacing:.26px">Nachbewertung</div>
<svg style="left:648px;top:987px" width="14" height="13" viewBox="0 0 14 13"><rect x="3.500" y="3.500" width="9" height="7" rx="1" fill="#eef2fa" stroke="#5a6f9a"/><path d="M3 0v6M0 3h6M1 1l4 4M5 1l-4 4" stroke="#e0b020" stroke-width="1"/></svg>
<!-- h scrollbar -->
<div style="left:757px;top:986px;width:507px;height:16px;background:#d5d9e2"></div>
<div style="left:758px;top:987px;width:8px;height:14px;background:#f4f4f6;border:1px solid #8a8e98"></div>
<div style="left:761px;top:990px;width:1px;height:8px;background:#666"></div>
<svg style="left:769px;top:989px" width="6" height="10"><path d="M6 0v10L0 5z" fill="#444"/></svg>
<div style="left:783px;top:986px;width:328px;height:15px;border:1px solid #9da1ab;border-radius:2px;background:linear-gradient(180deg,#f6f7f9,#e6e8ec 50%,#d6d9df)"></div>
<div style="left:943px;top:990px;width:1px;height:7px;background:#777;box-shadow:2px 0 0 #777,4px 0 0 #777,6px 0 0 #777"></div>
<svg style="left:1245px;top:989px" width="6" height="10"><path d="M0 0v10L6 5z" fill="#444"/></svg>
<div style="left:1256px;top:987px;width:8px;height:14px;background:#f4f4f6;border:1px solid #8a8e98"></div>
<div style="left:1259px;top:990px;width:1px;height:8px;background:#666"></div>
<div style="left:1264px;top:985px;width:16px;height:17px;background:#d5d9e2"></div>
<!-- status bar -->
<div style="left:0;top:1001px;width:1280px;height:23px;background:linear-gradient(180deg,#e9ebef 0,#dde0e6 35%,#cdd1d9 60%,#c3c7d0 100%);border-top:1px solid #a9adb6"></div>
<div style="left:8px;top:1004px;font-size:12px;line-height:18px;color:#333">Bereit</div>
<div style="left:47px;top:1004px;width:1px;height:18px;background:#aeb2bb;box-shadow:1px 0 0 #eceef2"></div>
<div style="left:1035px;top:1004px;width:1px;height:18px;background:#aeb2bb;box-shadow:1px 0 0 #eceef2"></div>
<div class="ybtn" style="left:1040px;top:1003px;width:19px;height:19px"></div>
<svg style="left:1043px;top:1007px" width="13" height="11" viewBox="0 0 13 11"><rect x=".5" y=".5" width="12" height="10" fill="#fff" stroke="#6a5a2a"/><path d="M.5 3.500h12M.5 7h12M4.500 .5v10M8.500 .5v10" stroke="#6a5a2a"/></svg>
<svg style="left:1061px;top:1006px" width="15" height="13" viewBox="0 0 15 13"><rect x=".5" y=".5" width="14" height="12" fill="#c9ccd4" stroke="#555"/><rect x="3.500" y="2.500" width="8" height="8" fill="#fff" stroke="#555"/><rect x="5.500" y="4.500" width="4" height="3" fill="#ddd" stroke="#777" stroke-width=".6"/></svg>
<svg style="left:1080px;top:1006px" width="15" height="13" viewBox="0 0 15 13"><rect x=".5" y=".5" width="14" height="12" fill="#c9ccd4" stroke="#555"/><rect x="1.500" y="1.500" width="5" height="7" fill="#fff" stroke="#555"/><rect x="7.500" y="1.500" width="4" height="7" fill="#fff" stroke="#555"/></svg>
<div style="left:1106px;top:1004px;font-size:11.500px;line-height:18px;color:#222;white-space:nowrap;letter-spacing:-.2px">100 %</div>
<div style="left:1144px;top:1004px;width:17px;height:17px;border-radius:9px;border:1px solid #6d7078;background:radial-gradient(circle at 50% 30%,#fff,#dfe2e8)"></div>
<div style="left:1148px;top:1011px;width:9px;height:2px;background:#333"></div>
<div style="left:1162px;top:1012px;width:96px;height:1px;background:#8a8e98;box-shadow:0 1px 0 #eef0f4"></div>
<svg style="left:1205px;top:1004px" width="11" height="16" viewBox="0 0 11 16"><path d="M.5 .5h10v9L5.500 15 .5 9.500z" fill="#f2f3f6" stroke="#666"/></svg>
<div style="left:1259px;top:1004px;width:17px;height:17px;border-radius:9px;border:1px solid #6d7078;background:radial-gradient(circle at 50% 30%,#fff,#dfe2e8)"></div>
<div style="left:1263px;top:1011px;width:9px;height:2px;background:#333"></div>
<div style="left:1266px;top:1008px;width:2px;height:9px;background:#333"></div>

</div></body></html>
